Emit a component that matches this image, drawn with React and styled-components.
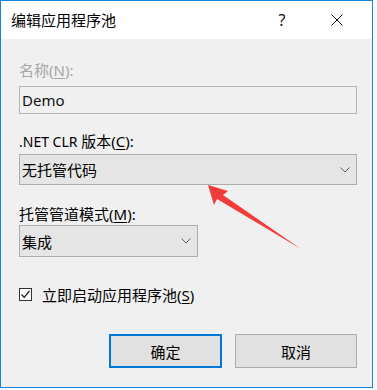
import React from 'react';
import styled, {createGlobalStyle} from "styled-components";

const GlobalStyle = createGlobalStyle`
  html, body {
    margin: 0;
    padding: 0;
    background: #f7fafd;
  }
  body {
    width: 377px;
    height: 390px;
    overflow: hidden;
    font-family: "Noto Sans", "Noto Sans CJK SC", sans-serif;
  }
`

const Window = styled.div`
  position: relative;
  box-sizing: border-box;
  width: 373px;
  height: 388px;
  border: 1px solid #1883d7;
  background: #f0f0f0;
  display: flex;
  flex-direction: column;
`

const TitleBar = styled.div`
  height: 38px;
  background: #fff;
  display: flex;
  align-items: center;
  padding-left: 10px;
  font-family: "Noto Sans CJK SC", sans-serif;
  font-size: 15px;
  color: #000;
`

const TitleText = styled.div`
  flex: 1;
  margin-top: -1px;
`

const TitleButton = styled.div`
  width: ${p => p.$width}px;
  height: 38px;
  display: flex;
  align-items: center;
  justify-content: center;
  font-size: 16px;
  color: #111;
  font-family: "Noto Sans", sans-serif;
`

const Body = styled.div`
  flex: 1;
  display: flex;
  flex-direction: column;
  padding: 21px 15px 0 18px;
  font-family: "Noto Sans", "Noto Sans CJK SC", sans-serif;
  font-size: 15px;
  color: #000;
`

const Label = styled.div`
  height: 20px;
  line-height: 20px;
  margin-top: ${p => p.$top || 0}px;
  color: ${p => p.$disabled ? '#a6a6a6' : '#000'};
  u {
    text-decoration: underline;
    text-underline-offset: 2px;
  }
`

const Latin = styled.span`
  font-size: 14px;
`

const TextBox = styled.div`
  box-sizing: border-box;
  margin-top: 6px;
  height: 28px;
  border: 1px solid #b4b4b4;
  background: #f0f0f0;
  display: flex;
  align-items: center;
  padding-left: 2px;
  color: #111;
`

const Combo = styled.div`
  box-sizing: border-box;
  margin-top: ${p => p.$top || 3}px;
  width: ${p => p.$width || '100%'};
  height: ${p => p.$height || 31}px;
  border: 1px solid #adadad;
  background: #e5e5e5;
  display: flex;
  align-items: center;
  padding: 0 6px 0 2px;
  color: #000;
`

const ComboText = styled.div`
  flex: 1;
`

const Chevron = () => (
    <svg width="10" height="6" viewBox="0 0 10 6">
        <path d="M0.5 0.5 L5 5 L9.5 0.5" fill="none" stroke="#606060" strokeWidth="1"/>
    </svg>
)

const CheckRow = styled.div`
  margin-top: 27px;
  display: flex;
  align-items: center;
  height: 20px;
  gap: 10px;
  u {
    text-decoration: underline;
    text-underline-offset: 2px;
  }
`

const CheckBox = styled.div`
  box-sizing: border-box;
  width: 13px;
  height: 13px;
  border: 1px solid #333;
  background: #fff;
  display: flex;
  align-items: center;
  justify-content: center;
`

const ButtonRow = styled.div`
  margin-top: 30px;
  display: flex;
  justify-content: flex-end;
  gap: 13px;
`

const Button = styled.div`
  box-sizing: border-box;
  width: ${p => p.$width}px;
  height: 34px;
  background: #e1e1e1;
  border: ${p => p.$default ? '2px solid #0078d7' : '1px solid #adadad'};
  display: flex;
  align-items: center;
  justify-content: center;
  color: #000;
`

const Arrow = styled.svg`
  position: absolute;
  left: 200px;
  top: 178px;
`

export default function App() {
    return (
        <>
            <GlobalStyle/>
            <Window>
                <TitleBar>
                    <TitleText>编辑应用程序池</TitleText>
                    <TitleButton $width={40}>?</TitleButton>
                    <TitleButton $width={70}>
                        <svg width="12" height="12" viewBox="0 0 12 12">
                            <path d="M0.5 0.5 L11.5 11.5 M11.5 0.5 L0.5 11.5" stroke="#111" strokeWidth="1"/>
                        </svg>
                    </TitleButton>
                </TitleBar>
                <Body>
                    <Label $disabled>名称(<u>N</u>):</Label>
                    <TextBox>Demo</TextBox>

                    <Label $top={17}><Latin>.NET CLR </Latin>版本(<u>C</u>):</Label>
                    <Combo>
                        <ComboText>无托管代码</ComboText>
                        <Chevron/>
                    </Combo>

                    <Label $top={19}>托管管道模式(<u>M</u>):</Label>
                    <Combo $top={1} $width="179px" $height={32}>
                        <ComboText>集成</ComboText>
                        <Chevron/>
                    </Combo>

                    <CheckRow>
                        <CheckBox>
                            <svg width="11" height="11" viewBox="0 0 11 11">
                                <path d="M1.5 5.5 L4.2 8.3 L9.5 2" fill="none" stroke="#222" strokeWidth="1.3"/>
                            </svg>
                        </CheckBox>
                        <span>立即启动应用程序池(<u>S</u>)</span>
                    </CheckRow>

                    <ButtonRow>
                        <Button $default $width={113}>确定</Button>
                        <Button $width={122}>取消</Button>
                    </ButtonRow>
                </Body>
                <Arrow width="110" height="80" viewBox="0 0 110 80">
                    <polygon points="7,6 27,12 22,16 100,70 16,20 13,26" fill="#f23b3b"/>
                </Arrow>
            </Window>
        </>
    );
}
